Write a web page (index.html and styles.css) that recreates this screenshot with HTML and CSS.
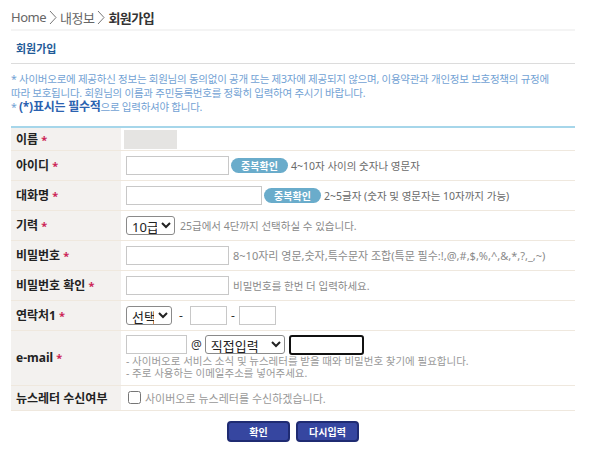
FILE: index.html
```html
<!DOCTYPE html>
<html lang="ko">
<head>
    <meta charset="UTF-8">
    <meta name="viewport" content="width=device-width, initial-scale=1.0">
    <title>회원가입</title>
    <link rel="stylesheet" href="styles.css">
</head>
<body>
    <div class="container">
        <div class="location">
            <span>Home</span>
            <svg class="arrow" width="8" height="15" viewBox="0 0 8 15"><path d="M1 1 L7 7.5 L1 14" fill="none" stroke="#777" stroke-width="1"/></svg>
            <span>내정보</span>
            <svg class="arrow" width="8" height="15" viewBox="0 0 8 15"><path d="M1 1 L7 7.5 L1 14" fill="none" stroke="#777" stroke-width="1"/></svg>
            <span class="current">회원가입</span>
        </div>

        <h2 class="title">회원가입</h2>

        <div class="notice">
            <p>* 사이버오로에 제공하신 정보는 회원님의 동의없이 공개 또는 제3자에 제공되지 않으며, 이용약관과 개인정보 보호정책의 규정에<br>따라 보호됩니다. 회원님의 이름과 주민등록번호를 정확히 입력하여 주시기 바랍니다.</p>
            <p>* <strong>(*)표시는 필수적</strong>으로 입력하셔야 합니다.</p>
        </div>

        <table class="join">
            <tr class="row-name">
                <th>이름 <em>*</em></th>
                <td><span class="name-box"></span></td>
            </tr>
            <tr>
                <th>아이디 <em>*</em></th>
                <td>
                    <div class="field">
                        <input type="text" class="inp">
                        <button class="btn-check">중복확인</button>
                        <span class="hint dark">4~10자 사이의 숫자나 영문자</span>
                    </div>
                </td>
            </tr>
            <tr>
                <th>대화명 <em>*</em></th>
                <td>
                    <div class="field">
                        <input type="text" class="inp wide">
                        <button class="btn-check">중복확인</button>
                        <span class="hint dark">2~5글자 (숫자 및 영문자는 10자까지 가능)</span>
                    </div>
                </td>
            </tr>
            <tr>
                <th>기력 <em>*</em></th>
                <td>
                    <div class="field">
                        <select class="sel grade">
                            <option>10급</option>
                        </select>
                        <span class="hint wide-gap">25급에서 4단까지 선택하실 수 있습니다.</span>
                    </div>
                </td>
            </tr>
            <tr>
                <th>비밀번호 <em>*</em></th>
                <td>
                    <div class="field">
                        <input type="password" class="inp">
                        <span class="hint long">8~10자리 영문,숫자,특수문자 조합(특문 필수:!,@,#,$,%,^,&amp;,*,?,_,~)</span>
                    </div>
                </td>
            </tr>
            <tr>
                <th>비밀번호 확인 <em>*</em></th>
                <td>
                    <div class="field">
                        <input type="password" class="inp">
                        <span class="hint">비밀번호를 한번 더 입력하세요.</span>
                    </div>
                </td>
            </tr>
            <tr>
                <th>연락처1 <em>*</em></th>
                <td>
                    <div class="field">
                        <select class="sel phone">
                            <option>선택</option>
                        </select>
                        <span class="dash first">-</span>
                        <input type="text" class="inp tel">
                        <span class="dash">-</span>
                        <input type="text" class="inp tel">
                    </div>
                </td>
            </tr>
            <tr class="row-mail">
                <th>e-mail <em>*</em></th>
                <td>
                    <div class="field">
                        <input type="text" class="inp mail">
                        <span class="at">@</span>
                        <select class="sel domain">
                            <option>직접입력</option>
                        </select>
                        <input type="text" class="inp focus">
                    </div>
                    <p class="desc">- 사이버오로 서비스 소식 및 뉴스레터를 받을 때와 비밀번호 찾기에 필요합니다.</p>
                    <p class="desc">- 주로 사용하는 이메일주소를 넣어주세요.</p>
                </td>
            </tr>
            <tr class="row-news">
                <th>뉴스레터 수신여부</th>
                <td>
                    <label class="agree"><input type="checkbox"> 사이버오로 뉴스레터를 수신하겠습니다.</label>
                </td>
            </tr>
        </table>

        <div class="buttons">
            <button class="btn-submit">확인</button>
            <button class="btn-submit">다시입력</button>
        </div>
    </div>
</body>
</html>
```

FILE: styles.css
```css
body {
    font-family: "Noto Sans", "Noto Sans CJK KR", sans-serif;
    margin: 0;
    padding: 0;
    background-color: #fff;
    color: #333;
}
.container {
    width: 564px;
    margin-left: 11px;
}
.location {
    display: flex;
    align-items: center;
    gap: 3px;
    height: 31px;
    padding-top: 5px;
    box-sizing: border-box;
    font-size: 13px;
    color: #666;
    border-bottom: 2px solid #f4f4f4;
    letter-spacing: -0.5px;
}
.location .current {
    color: #333;
    font-weight: bold;
}
.title {
    margin: 0;
    padding: 10px 5px 6px;
    font-size: 11px;
    line-height: 16px;
    color: #1f5b98;
    border-bottom: 1px solid #dcdcdc;
}
.notice {
    margin: 9px 0 11px;
    font-size: 10.5px;
    line-height: 13.5px;
    color: #72a2d4;
    white-space: nowrap;
    letter-spacing: -0.25px;
}
.notice p {
    margin: 0;
}
.notice strong {
    font-size: 12px;
    color: #2b62b0;
}
.join {
    width: 100%;
    border-collapse: collapse;
    border-top: 2px solid #a6d6ea;
}
.join th, .join td {
    border-bottom: 1px solid #efe8de;
    padding: 5px 5px;
    vertical-align: middle;
    height: 19px;
}
.join th {
    width: 100px;
    text-align: left;
    font-size: 12px;
    color: #222;
    background-color: #f3f1ef;
    white-space: nowrap;
}
.join th em {
    font-style: normal;
    color: #cc2456;
    font-size: 11px;
}
.join td {
    font-size: 11px;
    white-space: nowrap;
}
.field {
    display: flex;
    align-items: center;
}
.row-name th, .row-name td {
    padding-top: 2px;
    padding-bottom: 1px;
}
.name-box {
    display: block;
    width: 53px;
    height: 19px;
    margin-left: -2px;
    background-color: #e5e4e2;
}
.inp {
    box-sizing: border-box;
    width: 103px;
    height: 19px;
    border: 1px solid #c8c8c8;
    margin: 0;
    padding: 0 3px;
}
.inp.wide {
    width: 136px;
}
.inp.tel {
    width: 37px;
}
.inp.mail {
    width: 61px;
}
.inp.focus {
    width: 75px;
    height: 20px;
    border: 2px solid #111;
    border-radius: 3px;
    margin-left: 4px;
}
.btn-check {
    width: 57px;
    height: 15px;
    margin: 0 0 0 2px;
    padding: 0;
    border: none;
    border-radius: 8px;
    background-color: #6aaccb;
    color: #fff;
    font-family: "Noto Sans CJK KR", sans-serif;
    font-size: 10px;
    font-weight: bold;
    line-height: 15px;
}
.hint {
    margin-left: 4px;
    font-size: 10.5px;
    color: #8a8a8a;
}
.hint.dark {
    margin-left: 3px;
    color: #6a6a6a;
}
.hint.wide-gap {
    margin-left: 5px;
}
.hint.long {
    font-size: 11px;
}
.sel {
    box-sizing: border-box;
    height: 19px;
    margin: 0;
    padding: 0 1px;
    font-family: "Noto Sans", "Noto Sans CJK KR", sans-serif;
    font-size: 13px;
    color: #222;
    border: 1px solid #8a8a8a;
    border-radius: 3px;
    background-color: #fff;
}
.sel.grade {
    width: 49px;
}
.sel.phone {
    width: 46px;
}
.sel.domain {
    width: 80px;
}
.dash {
    display: inline-block;
    width: 12px;
    text-align: center;
    font-size: 12px;
    color: #333;
}
.dash.first {
    width: 18px;
}
.at {
    margin: 0 3px 0 4px;
    font-size: 12px;
    color: #333;
}
.desc {
    margin: 0;
    font-size: 10.5px;
    line-height: 12.5px;
    color: #999;
}
.row-mail th, .row-mail td {
    padding-top: 4px;
    padding-bottom: 5px;
}
.row-news th, .row-news td {
    padding-top: 3px;
    padding-bottom: 3px;
    height: 18px;
}
.agree {
    display: flex;
    align-items: center;
    gap: 4px;
    color: #999;
    font-size: 11px;
}
.agree input {
    margin: 0 0 0 2px;
    width: 13px;
    height: 13px;
}
.buttons {
    display: flex;
    justify-content: center;
    gap: 6px;
    margin-top: 10px;
}
.btn-submit {
    width: 63px;
    height: 21px;
    padding: 0;
    border: 2px solid #1f2b72;
    border-radius: 4px;
    background-color: #3646a0;
    color: #fff;
    font-family: "Noto Sans CJK KR", sans-serif;
    font-size: 10px;
    font-weight: bold;
    cursor: pointer;
}
```
